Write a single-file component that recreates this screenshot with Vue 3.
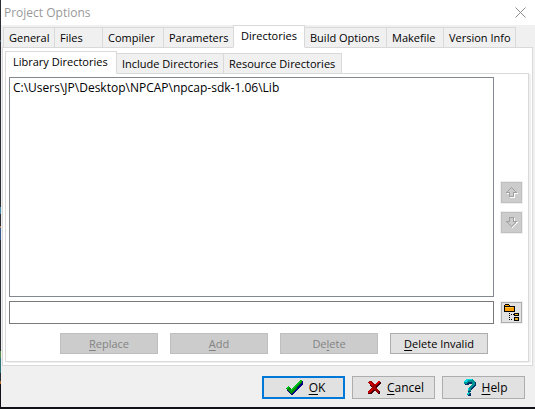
<script setup>
import { ref } from 'vue'

const tabs = ['General', 'Files', 'Compiler', 'Parameters', 'Directories', 'Build Options', 'Makefile', 'Version Info']
const activeTab = ref('Directories')

const subTabs = ['Library Directories', 'Include Directories', 'Resource Directories']
const activeSubTab = ref('Library Directories')

const directories = ref(['C:\\Users\\JP\\Desktop\\NPCAP\\npcap-sdk-1.06\\Lib'])
const selected = ref([])
const path = ref('')

const actions = [
  { pre: '', key: 'R', post: 'eplace', disabled: true },
  { pre: '', key: 'A', post: 'dd', disabled: true },
  { pre: 'De', key: 'l', post: 'ete', disabled: true },
  { pre: '', key: 'D', post: 'elete Invalid', disabled: false },
]
</script>

<template>
  <div class="desktop">
    <main class="dialog">
      <header class="titlebar">
        <h1>Project Options</h1>
        <button class="close" type="button" aria-label="Close">
          <svg width="11" height="11" viewBox="0 0 11 11"><path d="M.5.5l10 10M10.500.5l-10 10" fill="none" stroke="#8c8c8c" /></svg>
        </button>
      </header>

      <nav class="tabs main-tabs" role="tablist" aria-label="Project options">
        <button v-for="t in tabs" :key="t" type="button" role="tab" class="tab"
          :class="{ active: t === activeTab }" :aria-selected="t === activeTab" @click="activeTab = t">{{ t }}</button>
      </nav>

      <section class="pane">
        <nav class="tabs sub-tabs" role="tablist" aria-label="Directory kinds">
          <button v-for="t in subTabs" :key="t" type="button" role="tab" class="tab"
            :class="{ active: t === activeSubTab }" :aria-selected="t === activeSubTab" @click="activeSubTab = t">{{ t }}</button>
        </nav>

        <div class="subpane">
          <div class="row list-row">
            <select v-model="selected" class="list" multiple size="2" aria-label="Directories">
              <option v-for="d in directories" :key="d" :value="d">{{ d }}</option>
            </select>
            <div class="movers">
              <button class="tool" type="button" disabled aria-label="Move up">
                <svg width="13" height="13" viewBox="0 0 13 13" shape-rendering="crispEdges">
                  <path d="M6.500 1.500l-5 5h3v4h4v-4h3z" fill="none" stroke="#fff" transform="translate(1 1)" />
                  <path d="M6.500 1.500l-5 5h3v4h4v-4h3z" fill="#ccc" stroke="#a0a0a0" />
                </svg>
              </button>
              <button class="tool" type="button" disabled aria-label="Move down">
                <svg width="13" height="13" viewBox="0 0 13 13" shape-rendering="crispEdges">
                  <path d="M6.500 10.500l-5-5h3v-4h4v4h3z" fill="none" stroke="#fff" transform="translate(1 1)" />
                  <path d="M6.500 10.500l-5-5h3v-4h4v4h3z" fill="#ccc" stroke="#a0a0a0" />
                </svg>
              </button>
            </div>
          </div>

          <div class="row">
            <input v-model="path" class="path" type="text" aria-label="Directory path" />
            <button class="tool browse" type="button" aria-label="Browse">
              <svg width="17" height="17" viewBox="0 0 17 17" shape-rendering="crispEdges">
                <path d="M1 1h1V0h4v1h1v1h5v6H1z" fill="#000" />
                <path d="M2 1h4v1H2zM2 3h9v4H2z" fill="#ffa000" />
                <path d="M2 3h8v1H2z" fill="#ffc850" />
                <path d="M6 9h1v1H6zM8 10h1v1H8zM6 11h1v1H6zM10 10h1v1h-1zM6 13h1v1H6zM8 15h1v1H8zM6 15h1v1H6z" fill="#000" />
                <path d="M11 9h5v3h-5zM11 13h5v4h-5z" fill="#000" />
                <path d="M12 10h3v1h-3zM12 14h3v2h-3z" fill="#e8b020" />
              </svg>
            </button>
          </div>

          <div class="actions">
            <button v-for="a in actions" :key="a.key + a.post" class="btn" type="button" :disabled="a.disabled"><span>{{ a.pre }}<u>{{ a.key }}</u>{{ a.post }}</span></button>
          </div>
        </div>
      </section>

      <footer class="footer">
        <button class="btn big primary" type="button">
          <svg width="17" height="16" viewBox="0 0 17 16" shape-rendering="crispEdges">
            <path d="M1 9l2-2 3 3 9-9h2v3L7 15H5L1 11z" fill="#000080" />
            <path d="M0 8l2-2 3 3 9-9h2v2L6 14H5L0 9z" fill="#008a00" />
            <path d="M0 8l2-2 1 1-2 2zM5 10l8-9 3-1-9 9-2 2z" fill="#00c820" />
          </svg>
          <span><u>O</u>K</span>
        </button>
        <button class="btn big" type="button">
          <svg width="14" height="15" viewBox="0 0 14 15" shape-rendering="crispEdges">
            <path d="M2 3l2-1h2l2 4 4-4h2v1l-4 5 3 4v2h-2l-3-4-4 4H1v-2l4-4z" fill="#400010" />
            <path d="M1 2l2-1h2l3 4 3-4h2v1L9 7l3 4v2h-2L7 9l-4 4H1v-2l4-4z" fill="#9c0000" />
            <path d="M2 2h2l2 3-1 1zM11 1h2L9 6 8 5zM1 12l4-4 1 1-4 4H1z" fill="#d80000" />
          </svg>
          <span><u>C</u>ancel</span>
        </button>
        <button class="btn big" type="button">
          <svg width="12" height="17" viewBox="0 0 12 17" shape-rendering="crispEdges">
            <path d="M1 3l3-2h5l3 3v3l-5 4v2H4v-3l4-4V5H6L4 6H1zM4 14h3v3H4z" fill="#003068" />
            <path d="M0 2l3-2h5l3 2v4L7 9v3H4V9l4-4V3H4L3 5H0zM4 13h2v1l-1 2H3v-2z" fill="#009494" />
            <path d="M0 2l3-2h5v1H4L2 3H0zM4 9h1v2H4zM3 14h2v1H3z" fill="#00e0e8" />
          </svg>
          <span><u>H</u>elp</span>
        </button>
      </footer>
    </main>
  </div>
</template>

<style>
body {
  margin: 0;
}
</style>

<style scoped>
* {
  box-sizing: border-box;
}

.desktop {
  min-height: 100vh;
  padding: 0 0 2px 1px;
  display: flex;
  background: linear-gradient(#2b2d35 0 40px, #4d6070 40px 42px, #2b2d35 42px 207px, #4688a8 207px 214px, #2b2d35 214px 226px, #b08068 226px 228px, #34588e 228px 240px, #2b2d35 240px 351px, #568c50 351px 358px, #2b7375 358px 373px, #2b2d35 373px 381px, #b86d2a 381px 384px, #101218 384px);
  font-family: "Open Sans", "Noto Sans", sans-serif;
  font-size: 12px;
  line-height: 16px;
  color: #000;
}

button,
input,
select {
  font: inherit;
  color: inherit;
  margin: 0;
  border-radius: 0;
}

.dialog {
  flex: 1;
  min-width: 0;
  display: flex;
  flex-direction: column;
  background: #f0f0f0;
}

.titlebar {
  height: 25px;
  padding: 0 9px 0 3px;
  display: flex;
  align-items: center;
  justify-content: space-between;
  background: #fff;
}

h1 {
  margin: 0;
  font-size: 12px;
  font-weight: 400;
  color: #999;
}

.close {
  padding: 0;
  border: 0;
  background: none;
  display: flex;
}

.tabs {
  display: grid;
  align-items: end;
  justify-content: start;
  height: 23px;
  margin-bottom: -1px;
  font-size: 11px;
}

.main-tabs {
  grid-template-columns: 51px 48px 61px 70px 71px 82px 57px 72px;
  padding-left: 2px;
}

.sub-tabs {
  grid-template-columns: 111px 107px 118px;
  padding-left: 2px;
}

.tab {
  height: 21px;
  margin-right: -1px;
  padding: 0 0 0 5px;
  border: 1px solid #d9d9d9;
  background: #f0f0f0;
  text-align: left;
  white-space: nowrap;
}

.tab.active {
  position: relative;
  height: 23px;
  padding: 0 0 2px 7px;
  border-bottom-color: #fff;
  background: #fff;
}

.pane {
  flex: 1;
  display: flex;
  flex-direction: column;
  margin: 0 2px 0 1px;
  padding: 3px 1px 3px 0;
  border: 1px solid #d9d9d9;
  background: #fff;
}

.subpane {
  flex: 1;
  display: flex;
  flex-direction: column;
  gap: 4px;
  margin: 0 2px 0 2px;
  padding: 3px 6px 7px 3px;
  border: 1px solid #d9d9d9;
  box-shadow: 2px 1px 0 #f0f0f0;
}

.row {
  display: flex;
  align-items: center;
  gap: 7px;
}

.list-row {
  flex: 1;
  align-items: stretch;
}

.list {
  flex: 1;
  min-width: 0;
  padding: 1px 2px;
  border: 1px solid #828790;
  background: #fff;
  overflow: hidden;
  outline: none;
}

.list option {
  padding: 0 1px;
  min-height: 16px;
}

.movers {
  display: flex;
  flex-direction: column;
  justify-content: center;
  gap: 9px;
  padding-top: 40px;
}

.tool {
  width: 21px;
  height: 21px;
  padding: 0;
  display: flex;
  align-items: center;
  justify-content: center;
  border: 1px solid #adadad;
  background: #e1e1e1;
  box-shadow: 0 0 0 1px #f0f0f0;
}

.tool:disabled {
  border-color: #bfbfbf;
  background: #ccc;
}

.path {
  flex: 1;
  min-width: 0;
  height: 23px;
  padding: 0 3px;
  border: 1px solid #7a7a7a;
  background: #fff;
}

.actions {
  display: flex;
  justify-content: center;
  gap: 12px;
  padding: 5px 0 0 17px;
  font-size: 11px;
}

.btn {
  width: 98px;
  height: 21px;
  padding: 0;
  display: flex;
  align-items: center;
  justify-content: center;
  gap: 6px;
  border: 1px solid #adadad;
  background: #e1e1e1;
}

.btn:disabled {
  border-color: #bfbfbf;
  background: #ccc;
  color: #838383;
}

u {
  text-underline-offset: 2px;
}

.footer {
  display: flex;
  justify-content: flex-end;
  gap: 7px;
  padding: 10px 10px 8px;
}

.big {
  width: 83px;
  height: 23px;
  padding-left: 4px;
}

.primary {
  border: 2px solid #0078d7;
}
</style>
